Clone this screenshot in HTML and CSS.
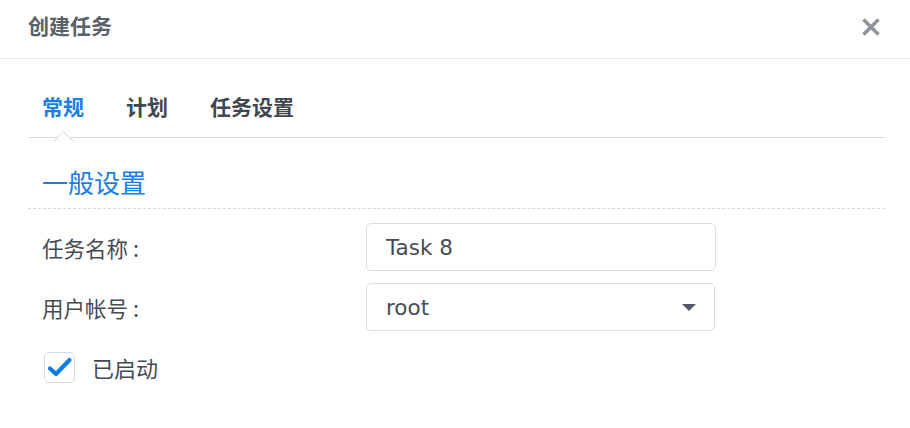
FILE: index.html
```html
<!DOCTYPE html>
<html lang="zh-CN">
<head>
<meta charset="utf-8">
<title>创建任务</title>
<link rel="stylesheet" href="styles.css">
</head>
<body>
<div class="dialog">
  <div class="header">
    <div class="title">创建任务</div>
    <button class="close" aria-label="关闭">
      <svg width="20" height="18" viewBox="0 0 20 18"><path d="M2.5 1.5 L17.5 16.5 M17.5 1.5 L2.5 16.5" stroke="#8e949a" stroke-width="3.6" stroke-linecap="butt" fill="none"/></svg>
    </button>
  </div>
  <div class="body">
    <div class="tabs">
      <div class="tab active">常规</div>
      <div class="tab">计划</div>
      <div class="tab">任务设置</div>
    </div>
    <div class="section-title">一般设置</div>
    <div class="form">
      <div class="row">
        <div class="label">任务名称<span class="colon">:</span></div>
        <div class="field">Task 8</div>
      </div>
      <div class="row">
        <div class="label">用户帐号<span class="colon">:</span></div>
        <div class="field select">root<span class="arrow"></span></div>
      </div>
      <div class="check-row">
        <span class="checkbox">
          <svg width="31" height="31" viewBox="0 0 31 31"><path d="M6 17.5 L12 23 L25.5 9" stroke="#0f7ce4" stroke-width="4.2" stroke-linecap="round" stroke-linejoin="round" fill="none"/></svg>
        </span>
        <span class="check-label">已启动</span>
      </div>
    </div>
  </div>
</div>
</body>
</html>
```
FILE: styles.css
```css
html, body {
  margin: 0;
  padding: 0;
  background: #ffffff;
}
body {
  font-family: "Noto Sans CJK SC", "Noto Sans", sans-serif;
  width: 910px;
  height: 428px;
  overflow: hidden;
}
.header {
  height: 52px;
  padding: 0 29px 6px 28px;
  border-bottom: 1px solid #e1e7ef;
  display: flex;
  align-items: center;
  justify-content: space-between;
}
.title {
  font-size: 21px;
  font-weight: 700;
  color: #59616a;
  line-height: 30px;
  margin-top: -2px;
}
.close {
  border: 0;
  background: none;
  padding: 0;
  width: 20px;
  height: 18px;
  margin-top: 2px;
  display: block;
}
.close svg { display: block; }
.body {
  padding: 0 25px 0 28px;
}
.tabs {
  display: flex;
  gap: 42px;
  padding: 32px 14px 16px;
  border-bottom: 1px solid #d4dee9;
  position: relative;
}
.tab {
  font-size: 21px;
  font-weight: 700;
  line-height: 30px;
  color: #41474e;
  position: relative;
}
.tab.active {
  color: #1a7ee6;
}
.tab.active::after {
  content: "";
  position: absolute;
  left: 50%;
  bottom: -28px;
  width: 14px;
  height: 14px;
  margin-left: -7px;
  background: #ffffff;
  border-left: 1px solid #d4dee9;
  border-top: 1px solid #d4dee9;
  transform: rotate(45deg);
}
.section-title {
  font-size: 26px;
  line-height: 36px;
  color: #1a7ee6;
  padding: 26px 14px 8px;
  border-bottom: 1px dashed #cfdbe7;
}
.form {
  padding: 14px 14px 0;
}
.row {
  display: flex;
  align-items: center;
  margin-bottom: 12px;
}
.label {
  width: 324px;
  font-size: 21.5px;
  color: #454b52;
}
.colon {
  margin-left: 5px;
}
.field {
  box-sizing: border-box;
  width: 350px;
  height: 48px;
  border: 1px solid #d5dee8;
  border-radius: 5px;
  padding: 0 18px 0 19px;
  display: flex;
  align-items: center;
  font-family: "DejaVu Sans", "Noto Sans", sans-serif;
  font-size: 21.5px;
  color: #454c54;
}
.select {
  justify-content: space-between;
  width: 349px;
}
.arrow {
  width: 0;
  height: 0;
  border-left: 7px solid transparent;
  border-right: 7px solid transparent;
  border-top: 7px solid #545a62;
}
.check-row {
  display: flex;
  align-items: center;
  margin-top: 20px;
  padding-left: 2px;
}
.checkbox {
  box-sizing: border-box;
  width: 31px;
  height: 31px;
  border: 1.5px solid #cfdce9;
  border-radius: 5px;
  position: relative;
}
.checkbox svg {
  position: absolute;
  left: -1.5px;
  top: -1.5px;
}
.check-label {
  margin-left: 17px;
  font-size: 22px;
  color: #454b52;
}
```
